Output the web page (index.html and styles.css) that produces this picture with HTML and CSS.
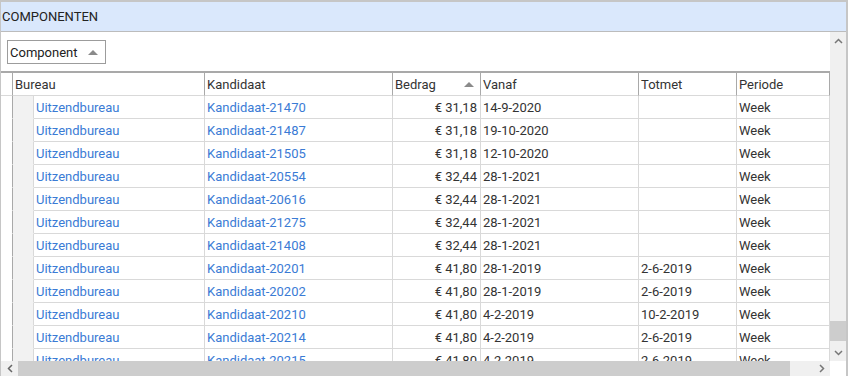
FILE: index.html
```html
<!DOCTYPE html>
<html lang="nl">
<head>
    <meta charset="UTF-8">
    <title>Componenten</title>
    <link rel="stylesheet" href="styles.css">
</head>
<body>
    <div class="panel">
        <div class="panel-title">COMPONENTEN</div>
        <div class="panel-body">
            <div class="grid-area">
                <div class="toolbar">
                    <div class="group-chip">Component <span class="sort-up"></span></div>
                </div>
                <div class="grid">
                    <div class="row head">
                        <div class="cell lead"></div>
                        <div class="cell wide">Bureau</div>
                        <div class="cell">Kandidaat</div>
                        <div class="cell sorted">Bedrag <span class="sort-up"></span></div>
                        <div class="cell">Vanaf</div>
                        <div class="cell">Totmet</div>
                        <div class="cell">Periode</div>
                    </div>

                    <div class="row"><div class="cell lead"></div><div class="cell indent"></div><div class="cell link">Uitzendbureau</div><div class="cell link">Kandidaat-21470</div><div class="cell num">€ 31,18</div><div class="cell">14-9-2020</div><div class="cell"></div><div class="cell">Week</div></div>
                    <div class="row"><div class="cell lead"></div><div class="cell indent"></div><div class="cell link">Uitzendbureau</div><div class="cell link">Kandidaat-21487</div><div class="cell num">€ 31,18</div><div class="cell">19-10-2020</div><div class="cell"></div><div class="cell">Week</div></div>
                    <div class="row"><div class="cell lead"></div><div class="cell indent"></div><div class="cell link">Uitzendbureau</div><div class="cell link">Kandidaat-21505</div><div class="cell num">€ 31,18</div><div class="cell">12-10-2020</div><div class="cell"></div><div class="cell">Week</div></div>
                    <div class="row"><div class="cell lead"></div><div class="cell indent"></div><div class="cell link">Uitzendbureau</div><div class="cell link">Kandidaat-20554</div><div class="cell num">€ 32,44</div><div class="cell">28-1-2021</div><div class="cell"></div><div class="cell">Week</div></div>
                    <div class="row"><div class="cell lead"></div><div class="cell indent"></div><div class="cell link">Uitzendbureau</div><div class="cell link">Kandidaat-20616</div><div class="cell num">€ 32,44</div><div class="cell">28-1-2021</div><div class="cell"></div><div class="cell">Week</div></div>
                    <div class="row"><div class="cell lead"></div><div class="cell indent"></div><div class="cell link">Uitzendbureau</div><div class="cell link">Kandidaat-21275</div><div class="cell num">€ 32,44</div><div class="cell">28-1-2021</div><div class="cell"></div><div class="cell">Week</div></div>
                    <div class="row"><div class="cell lead"></div><div class="cell indent"></div><div class="cell link">Uitzendbureau</div><div class="cell link">Kandidaat-21408</div><div class="cell num">€ 32,44</div><div class="cell">28-1-2021</div><div class="cell"></div><div class="cell">Week</div></div>
                    <div class="row"><div class="cell lead"></div><div class="cell indent"></div><div class="cell link">Uitzendbureau</div><div class="cell link">Kandidaat-20201</div><div class="cell num">€ 41,80</div><div class="cell">28-1-2019</div><div class="cell">2-6-2019</div><div class="cell">Week</div></div>
                    <div class="row"><div class="cell lead"></div><div class="cell indent"></div><div class="cell link">Uitzendbureau</div><div class="cell link">Kandidaat-20202</div><div class="cell num">€ 41,80</div><div class="cell">28-1-2019</div><div class="cell">2-6-2019</div><div class="cell">Week</div></div>
                    <div class="row"><div class="cell lead"></div><div class="cell indent"></div><div class="cell link">Uitzendbureau</div><div class="cell link">Kandidaat-20210</div><div class="cell num">€ 41,80</div><div class="cell">4-2-2019</div><div class="cell">10-2-2019</div><div class="cell">Week</div></div>
                    <div class="row"><div class="cell lead"></div><div class="cell indent"></div><div class="cell link">Uitzendbureau</div><div class="cell link">Kandidaat-20214</div><div class="cell num">€ 41,80</div><div class="cell">4-2-2019</div><div class="cell">2-6-2019</div><div class="cell">Week</div></div>
                    <div class="row"><div class="cell lead"></div><div class="cell indent"></div><div class="cell link">Uitzendbureau</div><div class="cell link">Kandidaat-20215</div><div class="cell num">€ 41,80</div><div class="cell">4-2-2019</div><div class="cell">2-6-2019</div><div class="cell">Week</div></div>
                </div>
            </div>

            <div class="vscroll">
                <div class="arrow">
                    <svg width="9" height="6" viewBox="0 0 9 6"><path d="M1 5 L4.5 1.5 L8 5" fill="none" stroke="#777" stroke-width="1.5"/></svg>
                </div>
                <div class="vtrack"><div class="vthumb"></div></div>
                <div class="arrow">
                    <svg width="9" height="6" viewBox="0 0 9 6"><path d="M1 1 L4.5 4.5 L8 1" fill="none" stroke="#777" stroke-width="1.5"/></svg>
                </div>
            </div>

            <div class="hscroll">
                <div class="arrow">
                    <svg width="6" height="9" viewBox="0 0 6 9"><path d="M5 1 L1.5 4.5 L5 8" fill="none" stroke="#666" stroke-width="1.5"/></svg>
                </div>
                <div class="hthumb"></div>
                <div class="htrack"></div>
                <div class="arrow">
                    <svg width="6" height="9" viewBox="0 0 6 9"><path d="M1 1 L4.5 4.5 L1 8" fill="none" stroke="#777" stroke-width="1.5"/></svg>
                </div>
            </div>
            <div class="corner"></div>
        </div>
    </div>
</body>
</html>
```

FILE: styles.css
```css
:root {
    --title-bg: #dae8fc;
    --frame: #c6c6c6;
    --line: #d9d9d9;
    --head-line: #a9a9a9;
    --text: #333333;
    --link: #3a7bd5;
    --bar: #f0f0f0;
    --thumb: #cdcdcd;
}

* {
    box-sizing: border-box;
}

body {
    margin: 0;
    font-family: Roboto, "Liberation Sans", Arial, sans-serif;
    font-size: 13px;
    color: var(--text);
    background: #ffffff;
}

.panel {
    width: 848px;
    height: 376px;
    overflow: hidden;
    border-top: 2px solid var(--frame);
    border-left: 1px solid var(--frame);
    border-right: 2px solid var(--frame);
    display: flex;
    flex-direction: column;
}

.panel-title {
    height: 30px;
    background: var(--title-bg);
    border-bottom: 1px solid #bcbcbc;
    padding: 0 1px;
    display: flex;
    align-items: center;
    font-size: 13px;
    color: #222;
    flex-shrink: 0;
}

.panel-body {
    flex: 1;
    display: grid;
    grid-template-columns: 829px 17px;
    grid-template-rows: 329px 17px;
    overflow: hidden;
}

.grid-area {
    overflow: hidden;
}

.toolbar {
    height: 39px;
    padding: 8px 6px 0;
}

.group-chip {
    width: 99px;
    height: 24px;
    border: 1px solid #9c9c9c;
    padding: 0 0 0 2px;
    display: flex;
    align-items: center;
    gap: 10px;
    color: #222;
}

.sort-up {
    display: inline-block;
    width: 0;
    height: 0;
    border-left: 5px solid transparent;
    border-right: 5px solid transparent;
    border-bottom: 5px solid #8a8a8a;
}

.grid {
    border-top: 2px solid var(--head-line);
}

.row {
    display: grid;
    grid-template-columns: 12px 21px 171px 188px 88px 158px 98px 93px;
    height: 23px;
}

.cell {
    border-right: 1px solid var(--line);
    border-bottom: 1px solid var(--line);
    padding: 0 3px 0 2px;
    display: flex;
    align-items: center;
    white-space: nowrap;
    overflow: hidden;
}

.row.head .cell {
    border-right-color: var(--head-line);
    border-bottom-color: var(--line);
    padding-left: 2px;
}

.cell.wide {
    grid-column: span 2;
}

.cell.sorted {
    justify-content: space-between;
    padding-right: 6px;
}

.cell.lead {
    border-right-color: var(--head-line);
    border-bottom-color: transparent;
}

.row.head .cell.lead {
    border-bottom-color: var(--line);
}

.cell.indent {
    background: #f2f2f2;
    border-bottom-color: #f2f2f2;
}

.cell.link {
    color: var(--link);
}

.cell.num {
    justify-content: flex-end;
    padding-right: 3px;
}

.vscroll {
    background: var(--bar);
    display: flex;
    flex-direction: column;
}

.vscroll .arrow {
    height: 17px;
    display: flex;
    align-items: center;
    justify-content: center;
}

.vtrack {
    flex: 1;
    display: flex;
    flex-direction: column;
    justify-content: flex-end;
    padding-bottom: 3px;
}

.vthumb {
    height: 20px;
    background: var(--thumb);
}

.hscroll {
    display: flex;
    background: var(--bar);
}

.hscroll .arrow {
    width: 17px;
    display: flex;
    align-items: center;
    justify-content: center;
    padding-bottom: 3px;
}

.hthumb {
    width: 772px;
    background: var(--thumb);
}

.htrack {
    flex: 1;
}

.corner {
    background: #ffffff;
}
```
